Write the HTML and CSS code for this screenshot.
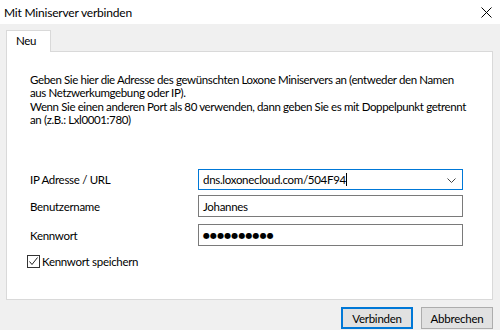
FILE: index.html
```html
<!DOCTYPE html>
<html lang="de">
<head>
<meta charset="utf-8">
<title>Mit Miniserver verbinden</title>
<link rel="stylesheet" href="styles.css">
</head>
<body>
<div class="window">
  <div class="titlebar">
    <span class="title">Mit Miniserver verbinden</span>
    <svg class="close" width="11" height="11" viewBox="0 0 11 11"><path d="M0.5 0.5 L10.5 10.5 M10.5 0.5 L0.5 10.5" stroke="#000" stroke-width="1" fill="none"/></svg>
  </div>
  <div class="content">
    <div class="tabs"><div class="tab">Neu</div></div>
    <div class="panel">
      <p class="intro">Geben Sie hier die Adresse des gewünschten Loxone Miniservers an (entweder den Namen<br>aus Netzwerkumgebung oder IP).<br>Wenn Sie einen anderen Port als 80 verwenden, dann geben Sie es mit Doppelpunkt getrennt<br>an (z.B.: Lxl0001:780)</p>
      <div class="form">
        <div class="row">
          <span class="label">IP Adresse / URL</span>
          <div class="field combo"><span class="value">dns.loxonecloud.com/504F94</span><span class="caret"></span>
            <svg class="chev" width="9" height="6" viewBox="0 0 9 6"><path d="M0.5 0.5 L4.5 4.5 L8.5 0.5" stroke="#444" stroke-width="1" fill="none"/></svg>
          </div>
        </div>
        <div class="row r2">
          <span class="label">Benutzername</span>
          <div class="field"><span class="value">Johannes</span></div>
        </div>
        <div class="row r3">
          <span class="label">Kennwort</span>
          <div class="field"><span class="value dots">●●●●●●●●●●</span></div>
        </div>
      </div>
      <div class="check">
        <span class="box"><svg width="11" height="11" viewBox="0 0 11 11"><path d="M1.5 5.5 L4 8.5 L9.5 1.5" stroke="#222" stroke-width="1" fill="none"/></svg></span>
        <span class="checklabel">Kennwort speichern</span>
      </div>
    </div>
    <div class="buttons">
      <button class="btn primary">Verbinden</button>
      <button class="btn">Abbrechen</button>
    </div>
  </div>
</div>
</body>
</html>
```

FILE: styles.css
```css
* { box-sizing: border-box; }
html, body { margin: 0; padding: 0; }
body {
  width: 500px;
  height: 330px;
  overflow: hidden;
  font-family: Lato, "Liberation Sans", Arial, sans-serif;
  font-size: 11.5px;
  letter-spacing: -0.3px;
  color: #000;
  background: #f0f0f0;
}
.window { width: 500px; height: 330px; display: flex; flex-direction: column; }
.titlebar {
  height: 24px;
  background: #fff;
  display: flex;
  align-items: center;
  justify-content: space-between;
  padding: 0 8px 0 4px;
}
.title { font-size: 12px; letter-spacing: -0.2px; }
.close { display: block; margin-top: 0; }
.content {
  flex: 1;
  padding: 6px 7px 0 6px;
  display: flex;
  flex-direction: column;
}
.tabs { display: flex; height: 21px; }
.tab {
  width: 45px;
  height: 22px;
  background: #fff;
  border: 1px solid #d9d9d9;
  border-bottom: none;
  padding: 3px 0 0 9px;
  position: relative;
  z-index: 1;
}
.panel {
  height: 249px;
  background: #fff;
  border: 1px solid #d9d9d9;
  padding: 21px 10px 0 23px;
}
.intro {
  margin: 0;
  line-height: 13.33px;
  white-space: nowrap;
  letter-spacing: -0.38px;
}
.form { margin-top: 43px; }
.row { display: flex; align-items: center; }
.r2 { margin-top: 5px; }
.r3 { margin-top: 7px; }
.label { width: 168px; }
.field {
  width: 265px;
  height: 22px;
  border: 1px solid #7a7a7a;
  display: flex;
  align-items: center;
  padding-left: 4px;
  position: relative;
}
.combo { height: 21px; border-color: #0078d7; }
.caret { width: 1px; height: 13px; background: #000; margin-left: 0; }
.chev { position: absolute; right: 6px; top: 8px; }
.dots { font-size: 8px; letter-spacing: 0.1px; font-family: "DejaVu Sans", sans-serif; }
.check {
  display: flex;
  align-items: center;
  margin-top: 9px;
  margin-left: -3px;
}
.box {
  width: 13px;
  height: 13px;
  border: 1px solid #333;
  background: #fff;
  display: flex;
  align-items: center;
  justify-content: center;
}
.box svg { display: block; }
.checklabel { margin-left: 2px; }
.buttons {
  display: flex;
  justify-content: flex-end;
  gap: 8px;
  margin-top: 7px;
  padding-right: 0;
}
.btn {
  width: 72px;
  height: 22px;
  font-family: inherit;
  font-size: 11.5px;
  letter-spacing: -0.25px;
  color: #000;
  background: #e1e1e1;
  border: 1px solid #adadad;
  padding: 0;
}
.primary { border: 2px solid #0078d7; }
```
